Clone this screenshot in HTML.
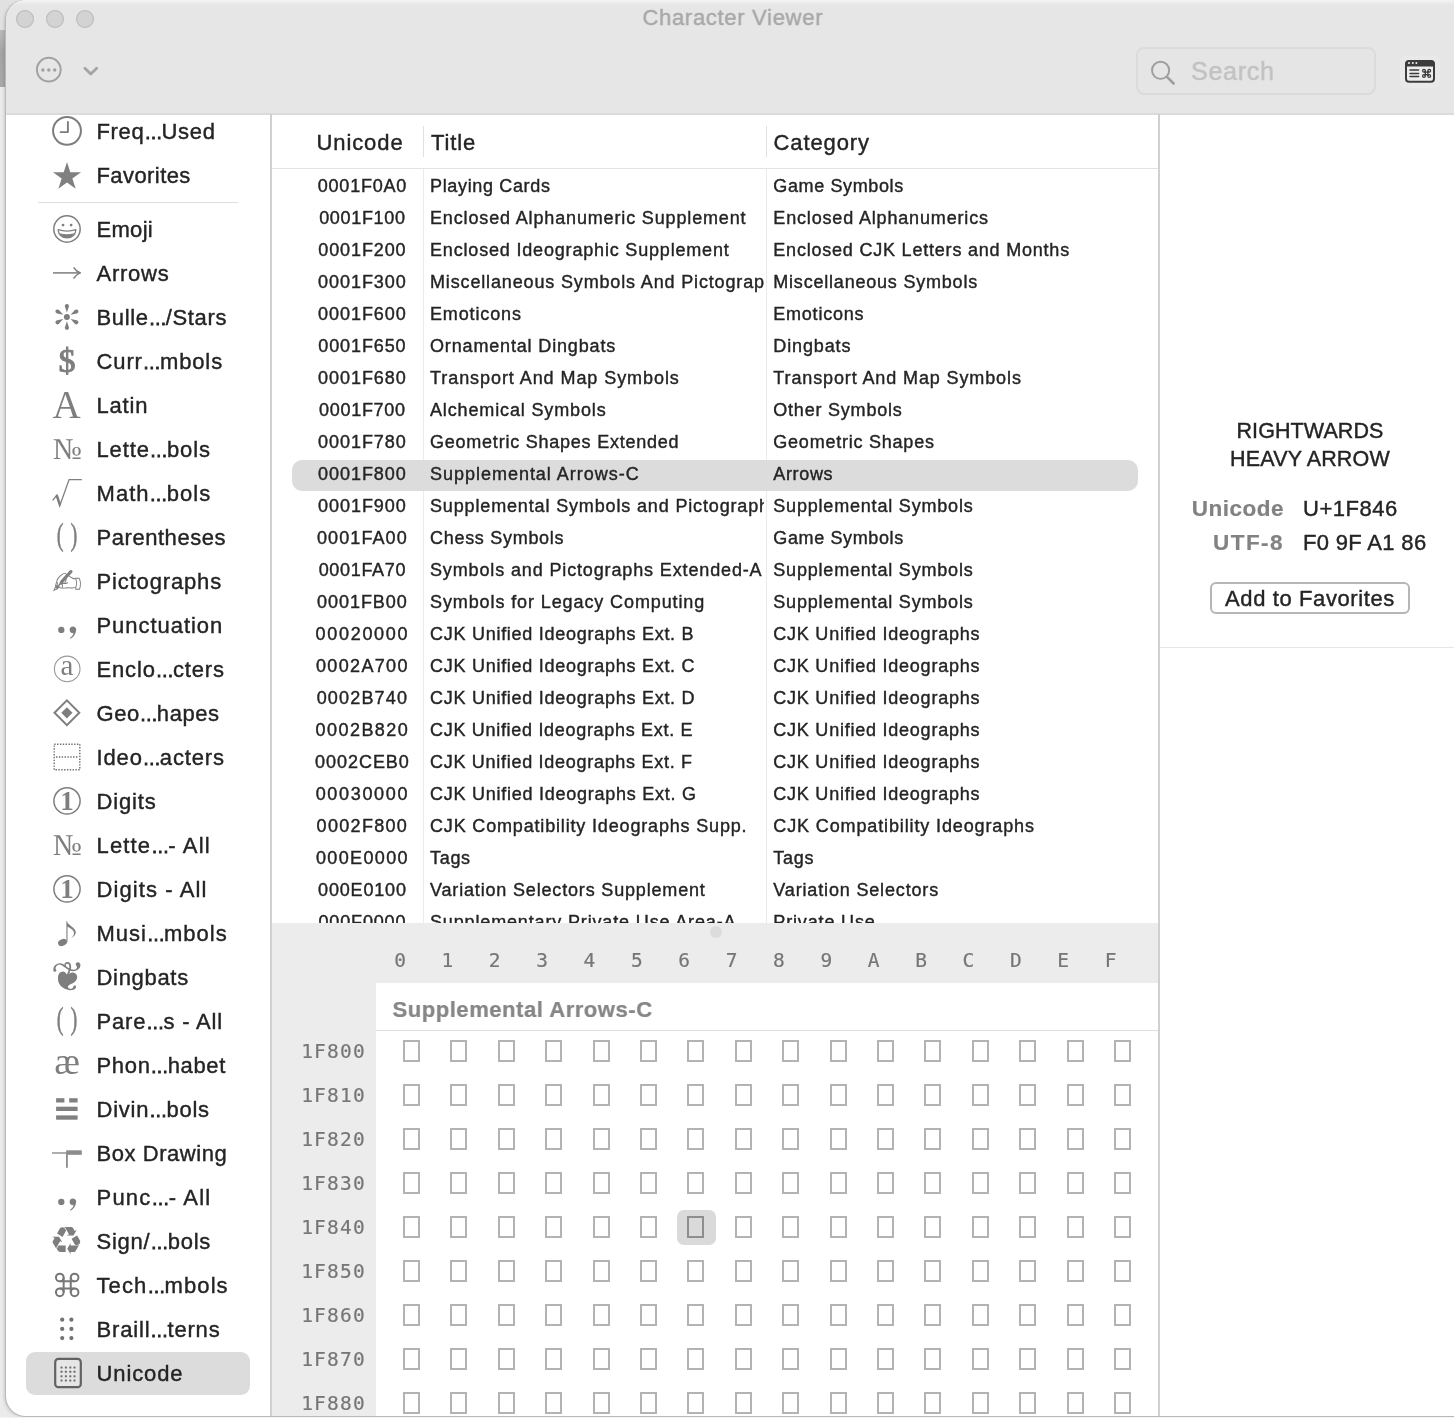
<!DOCTYPE html>
<html lang="en"><head><meta charset="utf-8"><title>Character Viewer</title>
<style>
html,body{margin:0;padding:0}
body{width:1454px;height:1418px;overflow:hidden;position:relative;background:#f6f6f6;font-family:"Liberation Sans",sans-serif;color:#242424}
div,span,svg{position:absolute;box-sizing:border-box}
.t{white-space:nowrap;line-height:1;-webkit-text-stroke:0.4px}
.e{position:static;font-size:18px;letter-spacing:-0.9px;-webkit-text-stroke:0.9px}
.mono{font-family:"DejaVu Sans Mono","Liberation Mono",monospace;-webkit-text-stroke:0.2px}
.b{font-weight:bold;-webkit-text-stroke:0.2px}
.g{color:#767676}
#win{left:6px;top:0;width:1460px;height:1416px;background:#fff;border-radius:20px 0 0 20px;overflow:hidden;box-shadow:-1px 0 0 0 #b9b9b9,0 1px 0 0 #b9b9b9,-2px 1px 3px rgba(0,0,0,.14)}
#bar{left:0;top:0;width:1460px;height:115px;background:linear-gradient(#f4f4f4 0,#e6e6e6 5px);border-bottom:2px solid #dbdbdb}
.tl{width:18px;height:18px;border-radius:9px;background:#d3d3d3;box-shadow:inset 0 0 0 1.2px #bfbfbf;top:9px}
.vl{width:2px;background:#d0d0d0}
.hl{height:1px;background:#e3e3e3}
.sel{background:#dcdcdc;border-radius:10px}
.bx{width:17px;height:22px;border:2px solid #b3b3b3}
</style></head>
<body>
<div style="left:0;top:0;width:40px;height:30px;background:#e1e1e1"></div>
<div style="left:0;top:30px;width:10px;height:57px;background:linear-gradient(#b9b9b9,#a4a4a4 40%,#a9a9a9)"></div>
<div style="left:0;top:87px;width:40px;height:1331px;background:#ebebeb"></div>
<div id="win">
<div id="pg" style="left:-6px;top:0;width:1454px;height:1418px;transform:translateZ(0);filter:grayscale(1)">
<div id="bar" style="left:6px;top:0"></div>
<div class="tl" style="left:16px;top:10px"></div>
<div class="tl" style="left:46px;top:10px"></div>
<div class="tl" style="left:76px;top:10px"></div>
<span class="t" style="top:7.00px;font-size:22px;left:432.80px;width:600px;text-align:center;letter-spacing:0.7px;color:#a9a9a9;">Character Viewer</span>
<div style="left:1136px;top:47px;width:240px;height:48px;border:2px solid #dbdbdb;border-radius:8px;background:#e5e5e5"></div>
<span class="t" style="top:59.00px;font-size:25px;left:1191.00px;letter-spacing:0.75px;color:#c2c2c2;">Search</span>
<svg width="1454" height="114" style="left:0;top:0" viewBox="0 0 1454 114"><circle cx="48.8" cy="69.7" r="11.85" fill="none" stroke="#a2a2a2" stroke-width="2"/><circle cx="42.9" cy="70" r="1.75" fill="#a2a2a2"/><circle cx="48.8" cy="70" r="1.75" fill="#a2a2a2"/><circle cx="54.7" cy="70" r="1.75" fill="#a2a2a2"/><path d="M84.9 68.2 L90.8 74 L96.7 68.2" fill="none" stroke="#a4a4a4" stroke-width="2.8" stroke-linecap="round" stroke-linejoin="round"/><circle cx="1160.6" cy="70.3" r="8.6" fill="none" stroke="#9e9e9e" stroke-width="1.9"/><path d="M1167 76.9 L1173.6 83.5" stroke="#9e9e9e" stroke-width="2.6" stroke-linecap="round"/><rect x="1400" y="56" width="40" height="32" rx="6" fill="#ffffff" opacity="0.13"/><rect x="1406" y="61" width="28" height="20.8" rx="3" fill="#ededed" stroke="#3c3c3c" stroke-width="2"/><path d="M1406 66 V63.5 Q1406 61 1408.5 61 H1431.500 Q1434 61 1434 63.5 V66Z" fill="#3c3c3c" stroke="#3c3c3c" stroke-width="1"/><circle cx="1409.0" cy="63.1" r="1" fill="#f0f0f0"/><circle cx="1412.8" cy="63.1" r="1" fill="#f0f0f0"/><circle cx="1416.4" cy="63.1" r="1" fill="#f0f0f0"/><path d="M1410 70.1 H1418.600" stroke="#3c3c3c" stroke-width="1.5" stroke-linecap="round"/><path d="M1410 73.4 H1418.600" stroke="#3c3c3c" stroke-width="1.5" stroke-linecap="round"/><path d="M1410 76.6 H1418.600" stroke="#3c3c3c" stroke-width="1.5" stroke-linecap="round"/><g transform="translate(1426.60 73.40) scale(0.355)" fill="none" stroke="#3c3c3c" stroke-width="3.66"><circle cx="-7.40" cy="-7.40" r="3.85"/><circle cx="7.40" cy="-7.40" r="3.85"/><circle cx="7.40" cy="7.40" r="3.85"/><circle cx="-7.40" cy="7.40" r="3.85"/><path d="M-3.55 -7.40 V7.40 M3.55 -7.40 V7.40 M-7.40 -3.55 H7.40 M-7.40 3.55 H7.40"/></g></svg>
<div class="sel" style="left:26px;top:1352px;width:224px;height:43px;border-radius:9px"></div>
<div class="hl" style="left:38px;top:202px;width:200px;background:#dedede"></div>
<span id="s0" class="t" style="top:121.00px;font-size:22px;left:96.50px;letter-spacing:0.675px;">Freq<span class="e">…</span>Used</span>
<span id="s1" class="t" style="top:165.00px;font-size:22px;left:96.50px;letter-spacing:0.425px;">Favorites</span>
<span id="s2" class="t" style="top:219.00px;font-size:22px;left:96.50px;letter-spacing:0.3px;">Emoji</span>
<span id="s3" class="t" style="top:263.00px;font-size:22px;left:96.50px;letter-spacing:0.75px;">Arrows</span>
<span id="s4" class="t" style="top:307.00px;font-size:22px;left:96.50px;letter-spacing:0.641px;">Bulle<span class="e">…</span>/Stars</span>
<span id="s5" class="t" style="top:351.00px;font-size:22px;left:96.50px;letter-spacing:0.883px;">Curr<span class="e">…</span>mbols</span>
<span id="s6" class="t" style="top:395.00px;font-size:22px;left:96.50px;letter-spacing:0.8px;">Latin</span>
<span id="s7" class="t" style="top:439.00px;font-size:22px;left:96.50px;letter-spacing:0.883px;">Lette<span class="e">…</span>bols</span>
<span id="s8" class="t" style="top:483.00px;font-size:22px;left:96.50px;letter-spacing:1.05px;">Math<span class="e">…</span>bols</span>
<span id="s9" class="t" style="top:527.00px;font-size:22px;left:96.50px;letter-spacing:0.55px;">Parentheses</span>
<span id="s10" class="t" style="top:571.00px;font-size:22px;left:96.50px;letter-spacing:0.85px;">Pictographs</span>
<span id="s11" class="t" style="top:615.00px;font-size:22px;left:96.50px;letter-spacing:0.95px;">Punctuation</span>
<span id="s12" class="t" style="top:659.00px;font-size:22px;left:96.50px;letter-spacing:0.85px;">Enclo<span class="e">…</span>cters</span>
<span id="s13" class="t" style="top:703.00px;font-size:22px;left:96.50px;letter-spacing:0.55px;">Geo<span class="e">…</span>hapes</span>
<span id="s14" class="t" style="top:747.00px;font-size:22px;left:96.50px;letter-spacing:0.85px;">Ideo<span class="e">…</span>acters</span>
<span id="s15" class="t" style="top:791.00px;font-size:22px;left:96.50px;letter-spacing:0.85px;">Digits</span>
<span id="s16" class="t" style="top:835.00px;font-size:22px;left:96.50px;letter-spacing:1.15px;">Lette<span class="e">…</span>- All</span>
<span id="s17" class="t" style="top:879.00px;font-size:22px;left:96.50px;letter-spacing:1.095px;">Digits - All</span>
<span id="s18" class="t" style="top:923.00px;font-size:22px;left:96.50px;letter-spacing:0.994px;">Musi<span class="e">…</span>mbols</span>
<span id="s19" class="t" style="top:967.00px;font-size:22px;left:96.50px;letter-spacing:0.693px;">Dingbats</span>
<span id="s20" class="t" style="top:1011.00px;font-size:22px;left:96.50px;letter-spacing:0.823px;">Pare<span class="e">…</span>s - All</span>
<span id="s21" class="t" style="top:1055.00px;font-size:22px;left:96.50px;letter-spacing:0.661px;">Phon<span class="e">…</span>habet</span>
<span id="s22" class="t" style="top:1099.00px;font-size:22px;left:96.50px;letter-spacing:0.772px;">Divin<span class="e">…</span>bols</span>
<span id="s23" class="t" style="top:1143.00px;font-size:22px;left:96.50px;letter-spacing:0.55px;">Box Drawing</span>
<span id="s24" class="t" style="top:1187.00px;font-size:22px;left:96.50px;letter-spacing:1.217px;">Punc<span class="e">…</span>- All</span>
<span id="s25" class="t" style="top:1231.00px;font-size:22px;left:96.50px;letter-spacing:0.772px;">Sign/<span class="e">…</span>bols</span>
<span id="s26" class="t" style="top:1275.00px;font-size:22px;left:96.50px;letter-spacing:1.105px;">Tech<span class="e">…</span>mbols</span>
<span id="s27" class="t" style="top:1319.00px;font-size:22px;left:96.50px;letter-spacing:0.823px;">Braill<span class="e">…</span>terns</span>
<span id="s28" class="t" style="top:1363.00px;font-size:22px;left:96.50px;letter-spacing:0.883px;">Unicode</span>
<svg width="270" height="1418" style="left:0;top:0" viewBox="0 0 270 1418"><circle cx="67" cy="130.85" r="13.95" fill="none" stroke="#7e7e7e" stroke-width="2"/><path d="M67.9 122 V132.100 H60.600" fill="none" stroke="#7c7c7c" stroke-width="1.9" stroke-linecap="round" stroke-linejoin="round"/><polygon points="67.00,162.00 70.31,172.20 81.04,172.20 72.36,178.50 75.68,188.70 67.00,182.40 58.32,188.70 61.64,178.50 52.96,172.20 63.69,172.20" fill="#808080"/><circle cx="66.97" cy="229" r="13.2" fill="none" stroke="#7e7e7e" stroke-width="1.5"/><circle cx="63.05" cy="225.05" r="1.4" fill="#7e7e7e"/><circle cx="71.1" cy="225.05" r="1.4" fill="#7e7e7e"/><path d="M58.1 229.700 Q67 232.500 75.900 229.700 Q75 237.800 67 237.800 Q59 237.800 58.100 229.700Z" fill="#fff" stroke="#7e7e7e" stroke-width="1.3" stroke-linejoin="round"/><path d="M59.7 233.300 Q67 235.300 74.300 233.300 Q72.300 237.700 67 237.700 Q61.700 237.700 59.700 233.300Z" fill="#7e7e7e"/><path d="M53 272.900 H79.800" stroke="#7e7e7e" stroke-width="1.5" fill="none"/><path d="M74 267.800 Q76.300 271.600 80.400 272.900 Q76.300 274.200 74 278" stroke="#7e7e7e" stroke-width="1.5" fill="none" stroke-linecap="round" stroke-linejoin="round"/><circle cx="66.9" cy="316.9" r="3.0" fill="#7e7e7e"/><path transform="translate(66.90 316.90) rotate(-90)" d="M4.3 0 L10.25 -1.95 A2.05 2.05 0 1 1 10.25 1.95Z" fill="#7e7e7e"/><path transform="translate(66.90 316.90) rotate(-150)" d="M4.3 0 L10.25 -1.95 A2.05 2.05 0 1 1 10.25 1.95Z" fill="#7e7e7e"/><path transform="translate(66.90 316.90) rotate(-210)" d="M4.3 0 L10.25 -1.95 A2.05 2.05 0 1 1 10.25 1.95Z" fill="#7e7e7e"/><path transform="translate(66.90 316.90) rotate(-270)" d="M4.3 0 L10.25 -1.95 A2.05 2.05 0 1 1 10.25 1.95Z" fill="#7e7e7e"/><path transform="translate(66.90 316.90) rotate(-330)" d="M4.3 0 L10.25 -1.95 A2.05 2.05 0 1 1 10.25 1.95Z" fill="#7e7e7e"/><path transform="translate(66.90 316.90) rotate(-390)" d="M4.3 0 L10.25 -1.95 A2.05 2.05 0 1 1 10.25 1.95Z" fill="#7e7e7e"/><text x="66.9" y="372.4" font-family="&quot;Liberation Serif&quot;,serif" font-size="34" font-weight="normal" text-anchor="middle" fill="#7e7e7e" stroke="#7e7e7e" stroke-width="1">$</text><text x="66.5" y="417.9" font-family="&quot;Liberation Serif&quot;,serif" font-size="39" font-weight="normal" text-anchor="middle" fill="#7e7e7e" >A</text><text x="67.2" y="459.0" font-family="&quot;Liberation Serif&quot;,serif" font-size="30.5" font-weight="normal" text-anchor="middle" fill="#7e7e7e" >№</text><path d="M52.7 500.400 L56.600 495.400 L59.700 506 L69.100 479.600 H81.800" fill="none" stroke="#7e7e7e" stroke-width="1.3" stroke-linejoin="miter"/><path d="M55.6 496 L57.700 494.300 L60.900 503.800 L59.700 507.200Z" fill="#7e7e7e"/><text transform="translate(60.1 545.0) scale(0.64 1)" font-family="&quot;Liberation Serif&quot;,serif" font-size="32" text-anchor="middle" fill="#7e7e7e" stroke="#7e7e7e" stroke-width="0.5">(</text><text transform="translate(74.0 545.0) scale(0.64 1)" font-family="&quot;Liberation Serif&quot;,serif" font-size="32" text-anchor="middle" fill="#7e7e7e" stroke="#7e7e7e" stroke-width="0.5">)</text><text x="67.0" y="593.6" font-family="&quot;DejaVu Sans&quot;,sans-serif" font-size="35.5" font-weight="normal" text-anchor="middle" fill="#7e7e7e" >✍</text><circle cx="61.3" cy="629.9" r="3.15" fill="#7e7e7e"/><path d="M72.9 629.90 m-3.3 0 a3.3 3.3 0 1 1 6.500 0.600 c-0.300 3.600 -2.400 6.400 -5.600 8.300 l-0.600 -0.900 c2.300 -1.600 3.500 -3.300 3.600 -5.200 c-0.400 0.300 -0.800 0.500 -1.400 0.500 a3.300 3.300 0 0 1 -2.500 -3.300Z" fill="#7e7e7e"/><circle cx="67.2" cy="668.9" r="12.8" fill="none" stroke="#9a9a9a" stroke-width="1.1"/><text x="67.0" y="675.2" font-family="&quot;Liberation Serif&quot;,serif" font-size="29" font-weight="normal" text-anchor="middle" fill="#7e7e7e" >a</text><path d="M66.9 700.400 L79.300 712.800 L66.900 725.200 L54.500 712.800Z" fill="none" stroke="#7e7e7e" stroke-width="2"/><path d="M66.9 707.200 L72.500 712.800 L66.900 718.400 L61.300 712.800Z" fill="#7e7e7e"/><rect x="54.2" y="744.200" width="25.6" height="25.6" fill="none" stroke="#6e6e6e" stroke-width="1.4" stroke-dasharray="1.4 1.45"/><path d="M56 757 H78" stroke="#6e6e6e" stroke-width="1.4" stroke-dasharray="1.4 1.45"/><circle cx="67" cy="800.9" r="13.1" fill="none" stroke="#7e7e7e" stroke-width="1.5"/><text x="67.0" y="810.1" font-family="&quot;Liberation Serif&quot;,serif" font-size="27" font-weight="bold" text-anchor="middle" fill="#7e7e7e" >1</text><circle cx="67" cy="888.9" r="13.1" fill="none" stroke="#7e7e7e" stroke-width="1.5"/><text x="67.0" y="898.1" font-family="&quot;Liberation Serif&quot;,serif" font-size="27" font-weight="bold" text-anchor="middle" fill="#7e7e7e" >1</text><text x="67.2" y="855.0" font-family="&quot;Liberation Serif&quot;,serif" font-size="30.5" font-weight="normal" text-anchor="middle" fill="#7e7e7e" >№</text><ellipse cx="62.500" cy="942.500" rx="4.6" ry="3.3" transform="rotate(-22 62.500 942.500)" fill="#7e7e7e"/><path d="M66.4 942 V920.300 C67.500 925.500 76 927.500 75.800 932.600 C75.700 935 73.500 936.800 71.200 938.200 C73.500 936 74.500 934 73.800 932 C72.800 929 69 928 67.500 926.500 V942Z" fill="#7e7e7e"/><text x="68.0" y="991.3" font-family="&quot;DejaVu Sans&quot;,sans-serif" font-size="41" font-weight="normal" text-anchor="middle" fill="#7e7e7e" >❦</text><text transform="translate(60.1 1029.0) scale(0.64 1)" font-family="&quot;Liberation Serif&quot;,serif" font-size="32" text-anchor="middle" fill="#7e7e7e" stroke="#7e7e7e" stroke-width="0.5">(</text><text transform="translate(74.0 1029.0) scale(0.64 1)" font-family="&quot;Liberation Serif&quot;,serif" font-size="32" text-anchor="middle" fill="#7e7e7e" stroke="#7e7e7e" stroke-width="0.5">)</text><text x="67.2" y="1074.2" font-family="&quot;Liberation Serif&quot;,serif" font-size="38.5" font-weight="normal" text-anchor="middle" fill="#7e7e7e" >æ</text><rect x="56.1" y="1098.2" width="8.3" height="4.3" fill="#808080"/><rect x="69.2" y="1098.2" width="8.400" height="4.3" fill="#808080"/><rect x="56.1" y="1106.7" width="21.5" height="4.3" fill="#808080"/><rect x="56.1" y="1115.4" width="21.5" height="4.3" fill="#808080"/><rect x="52" y="1152.300" width="15" height="1.4" fill="#8c8c8c"/><rect x="66.2" y="1150.300" width="15.6" height="4.5" fill="#8c8c8c"/><rect x="66" y="1154" width="1.8" height="13.8" fill="#8c8c8c"/><circle cx="61.3" cy="1201.9" r="3.15" fill="#7e7e7e"/><path d="M72.9 1201.90 m-3.3 0 a3.3 3.3 0 1 1 6.500 0.600 c-0.300 3.600 -2.400 6.400 -5.600 8.300 l-0.600 -0.900 c2.300 -1.600 3.500 -3.300 3.600 -5.200 c-0.400 0.300 -0.800 0.500 -1.400 0.500 a3.300 3.300 0 0 1 -2.500 -3.300Z" fill="#7e7e7e"/><text x="66.5" y="1253.9" font-family="&quot;DejaVu Sans&quot;,sans-serif" font-size="38" font-weight="normal" text-anchor="middle" fill="#7e7e7e" >♻</text><g transform="translate(67.20 1284.90) scale(1.000)" fill="none" stroke="#777777" stroke-width="2.00"><circle cx="-7.40" cy="-7.40" r="3.85"/><circle cx="7.40" cy="-7.40" r="3.85"/><circle cx="7.40" cy="7.40" r="3.85"/><circle cx="-7.40" cy="7.40" r="3.85"/><path d="M-3.55 -7.40 V7.40 M3.55 -7.40 V7.40 M-7.40 -3.55 H7.40 M-7.40 3.55 H7.40"/></g><circle cx="62.2" cy="1319.7" r="2.1" fill="#727272"/><circle cx="62.2" cy="1328.9" r="2.1" fill="#727272"/><circle cx="62.2" cy="1338.1" r="2.1" fill="#727272"/><circle cx="71.4" cy="1319.7" r="2.1" fill="#727272"/><circle cx="71.4" cy="1328.9" r="2.1" fill="#727272"/><circle cx="71.4" cy="1338.1" r="2.1" fill="#727272"/><rect x="55.2" y="1358.900" width="25.6" height="28.3" rx="3.3" fill="#e6e6e6" stroke="#626262" stroke-width="2.2"/><rect x="60.5" y="1366.4" width="2" height="2" rx="0.5" fill="#6c6c6c"/><rect x="60.5" y="1370.8" width="2" height="2" rx="0.5" fill="#6c6c6c"/><rect x="60.5" y="1375.2" width="2" height="2" rx="0.5" fill="#6c6c6c"/><rect x="60.5" y="1379.4" width="2" height="2" rx="0.5" fill="#6c6c6c"/><rect x="64.9" y="1366.4" width="2" height="2" rx="0.5" fill="#6c6c6c"/><rect x="64.9" y="1370.8" width="2" height="2" rx="0.5" fill="#6c6c6c"/><rect x="64.9" y="1375.2" width="2" height="2" rx="0.5" fill="#6c6c6c"/><rect x="64.9" y="1379.4" width="2" height="2" rx="0.5" fill="#6c6c6c"/><rect x="69.3" y="1366.4" width="2" height="2" rx="0.5" fill="#6c6c6c"/><rect x="69.3" y="1370.8" width="2" height="2" rx="0.5" fill="#6c6c6c"/><rect x="69.3" y="1375.2" width="2" height="2" rx="0.5" fill="#6c6c6c"/><rect x="69.3" y="1379.4" width="2" height="2" rx="0.5" fill="#6c6c6c"/><rect x="73.5" y="1366.4" width="2" height="2" rx="0.5" fill="#6c6c6c"/><rect x="73.5" y="1370.8" width="2" height="2" rx="0.5" fill="#6c6c6c"/><rect x="73.5" y="1375.2" width="2" height="2" rx="0.5" fill="#6c6c6c"/><rect x="73.5" y="1379.4" width="2" height="2" rx="0.5" fill="#6c6c6c"/></svg>
<div class="vl" style="left:270px;top:114px;height:1304px"></div>
<span class="t" style="top:132.00px;font-size:22px;left:316.50px;letter-spacing:0.9px;">Unicode</span>
<span class="t" style="top:132.00px;font-size:22px;left:431.00px;letter-spacing:0.9px;">Title</span>
<span class="t" style="top:132.00px;font-size:22px;left:773.50px;letter-spacing:0.9px;">Category</span>
<div class="vl" style="left:422.5px;top:126px;height:31px;width:1px;background:#e0e0e0"></div>
<div class="vl" style="left:765.5px;top:126px;height:31px;width:1px;background:#e0e0e0"></div>
<div class="hl" style="left:272px;top:168px;width:887px"></div>
<div class="vl" style="left:422.5px;top:169px;height:755px;width:1.5px;background:#ebebeb"></div>
<div class="vl" style="left:765.5px;top:169px;height:755px;width:1.5px;background:#ebebeb"></div>
<div class="sel" style="left:292px;top:460px;width:846px;height:31px"></div>
<span id="u0" class="t" style="top:177.00px;font-size:18px;left:62.40px;width:600px;text-align:center;letter-spacing:0.761px;">0001F0A0</span>
<span id="t0" class="t" style="top:177.00px;font-size:18px;left:430.00px;letter-spacing:0.654px;width:334px;overflow:hidden;padding-bottom:6px;">Playing Cards</span>
<span id="c0" class="t" style="top:177.00px;font-size:18px;left:773.30px;letter-spacing:0.627px;">Game Symbols</span>
<span id="u1" class="t" style="top:209.00px;font-size:18px;left:62.40px;width:600px;text-align:center;letter-spacing:0.676px;">0001F100</span>
<span id="t1" class="t" style="top:209.00px;font-size:18px;left:430.00px;letter-spacing:0.852px;width:334px;overflow:hidden;padding-bottom:6px;">Enclosed Alphanumeric Supplement</span>
<span id="c1" class="t" style="top:209.00px;font-size:18px;left:773.30px;letter-spacing:0.837px;">Enclosed Alphanumerics</span>
<span id="u2" class="t" style="top:241.00px;font-size:18px;left:62.40px;width:600px;text-align:center;letter-spacing:0.877px;">0001F200</span>
<span id="t2" class="t" style="top:241.00px;font-size:18px;left:430.00px;letter-spacing:0.82px;width:334px;overflow:hidden;padding-bottom:6px;">Enclosed Ideographic Supplement</span>
<span id="c2" class="t" style="top:241.00px;font-size:18px;left:773.30px;letter-spacing:0.79px;">Enclosed CJK Letters and Months</span>
<span id="u3" class="t" style="top:273.00px;font-size:18px;left:62.40px;width:600px;text-align:center;letter-spacing:0.962px;">0001F300</span>
<span id="t3" class="t" style="top:273.00px;font-size:18px;left:430.00px;letter-spacing:0.85px;width:334px;overflow:hidden;padding-bottom:6px;">Miscellaneous Symbols And Pictographs</span>
<span id="c3" class="t" style="top:273.00px;font-size:18px;left:773.30px;letter-spacing:0.79px;">Miscellaneous Symbols</span>
<span id="u4" class="t" style="top:305.00px;font-size:18px;left:62.40px;width:600px;text-align:center;letter-spacing:0.962px;">0001F600</span>
<span id="t4" class="t" style="top:305.00px;font-size:18px;left:430.00px;letter-spacing:0.861px;width:334px;overflow:hidden;padding-bottom:6px;">Emoticons</span>
<span id="c4" class="t" style="top:305.00px;font-size:18px;left:773.30px;letter-spacing:0.77px;">Emoticons</span>
<span id="u5" class="t" style="top:337.00px;font-size:18px;left:62.40px;width:600px;text-align:center;letter-spacing:0.877px;">0001F650</span>
<span id="t5" class="t" style="top:337.00px;font-size:18px;left:430.00px;letter-spacing:0.842px;width:334px;overflow:hidden;padding-bottom:6px;">Ornamental Dingbats</span>
<span id="c5" class="t" style="top:337.00px;font-size:18px;left:773.30px;letter-spacing:0.879px;">Dingbats</span>
<span id="u6" class="t" style="top:369.00px;font-size:18px;left:62.40px;width:600px;text-align:center;letter-spacing:0.966px;">0001F680</span>
<span id="t6" class="t" style="top:369.00px;font-size:18px;left:430.00px;letter-spacing:0.935px;width:334px;overflow:hidden;padding-bottom:6px;">Transport And Map Symbols</span>
<span id="c6" class="t" style="top:369.00px;font-size:18px;left:773.30px;letter-spacing:0.882px;">Transport And Map Symbols</span>
<span id="u7" class="t" style="top:401.00px;font-size:18px;left:62.40px;width:600px;text-align:center;letter-spacing:0.734px;">0001F700</span>
<span id="t7" class="t" style="top:401.00px;font-size:18px;left:430.00px;letter-spacing:0.859px;width:334px;overflow:hidden;padding-bottom:6px;">Alchemical Symbols</span>
<span id="c7" class="t" style="top:401.00px;font-size:18px;left:773.30px;letter-spacing:0.785px;">Other Symbols</span>
<span id="u8" class="t" style="top:433.00px;font-size:18px;left:62.40px;width:600px;text-align:center;letter-spacing:0.939px;">0001F780</span>
<span id="t8" class="t" style="top:433.00px;font-size:18px;left:430.00px;letter-spacing:0.769px;width:334px;overflow:hidden;padding-bottom:6px;">Geometric Shapes Extended</span>
<span id="c8" class="t" style="top:433.00px;font-size:18px;left:773.30px;letter-spacing:0.77px;">Geometric Shapes</span>
<span id="u9" class="t" style="top:465.00px;font-size:18px;left:62.40px;width:600px;text-align:center;letter-spacing:0.962px;">0001F800</span>
<span id="t9" class="t" style="top:465.00px;font-size:18px;left:430.00px;letter-spacing:0.98px;width:334px;overflow:hidden;padding-bottom:6px;">Supplemental Arrows-C</span>
<span id="c9" class="t" style="top:465.00px;font-size:18px;left:773.30px;letter-spacing:0.66px;">Arrows</span>
<span id="u10" class="t" style="top:497.00px;font-size:18px;left:62.40px;width:600px;text-align:center;letter-spacing:0.966px;">0001F900</span>
<span id="t10" class="t" style="top:497.00px;font-size:18px;left:430.00px;letter-spacing:0.85px;width:334px;overflow:hidden;padding-bottom:6px;">Supplemental Symbols and Pictographs</span>
<span id="c10" class="t" style="top:497.00px;font-size:18px;left:773.30px;letter-spacing:0.806px;">Supplemental Symbols</span>
<span id="u11" class="t" style="top:529.00px;font-size:18px;left:62.40px;width:600px;text-align:center;letter-spacing:1.081px;">0001FA00</span>
<span id="t11" class="t" style="top:529.00px;font-size:18px;left:430.00px;letter-spacing:0.707px;width:334px;overflow:hidden;padding-bottom:6px;">Chess Symbols</span>
<span id="c11" class="t" style="top:529.00px;font-size:18px;left:773.30px;letter-spacing:0.627px;">Game Symbols</span>
<span id="u12" class="t" style="top:561.00px;font-size:18px;left:62.40px;width:600px;text-align:center;letter-spacing:0.68px;">0001FA70</span>
<span id="t12" class="t" style="top:561.00px;font-size:18px;left:430.00px;letter-spacing:0.862px;width:334px;overflow:hidden;padding-bottom:6px;">Symbols and Pictographs Extended-A</span>
<span id="c12" class="t" style="top:561.00px;font-size:18px;left:773.30px;letter-spacing:0.806px;">Supplemental Symbols</span>
<span id="u13" class="t" style="top:593.00px;font-size:18px;left:62.40px;width:600px;text-align:center;letter-spacing:0.939px;">0001FB00</span>
<span id="t13" class="t" style="top:593.00px;font-size:18px;left:430.00px;letter-spacing:0.895px;width:334px;overflow:hidden;padding-bottom:6px;">Symbols for Legacy Computing</span>
<span id="c13" class="t" style="top:593.00px;font-size:18px;left:773.30px;letter-spacing:0.806px;">Supplemental Symbols</span>
<span id="u14" class="t" style="top:625.00px;font-size:18px;left:62.40px;width:600px;text-align:center;letter-spacing:1.707px;">00020000</span>
<span id="t14" class="t" style="top:625.00px;font-size:18px;left:430.00px;letter-spacing:0.731px;width:334px;overflow:hidden;padding-bottom:6px;">CJK Unified Ideographs Ext. B</span>
<span id="c14" class="t" style="top:625.00px;font-size:18px;left:773.30px;letter-spacing:0.766px;">CJK Unified Ideographs</span>
<span id="u15" class="t" style="top:657.00px;font-size:18px;left:62.40px;width:600px;text-align:center;letter-spacing:1.336px;">0002A700</span>
<span id="t15" class="t" style="top:657.00px;font-size:18px;left:430.00px;letter-spacing:0.731px;width:334px;overflow:hidden;padding-bottom:6px;">CJK Unified Ideographs Ext. C</span>
<span id="c15" class="t" style="top:657.00px;font-size:18px;left:773.30px;letter-spacing:0.766px;">CJK Unified Ideographs</span>
<span id="u16" class="t" style="top:689.00px;font-size:18px;left:62.40px;width:600px;text-align:center;letter-spacing:1.166px;">0002B740</span>
<span id="t16" class="t" style="top:689.00px;font-size:18px;left:430.00px;letter-spacing:0.731px;width:334px;overflow:hidden;padding-bottom:6px;">CJK Unified Ideographs Ext. D</span>
<span id="c16" class="t" style="top:689.00px;font-size:18px;left:773.30px;letter-spacing:0.766px;">CJK Unified Ideographs</span>
<span id="u17" class="t" style="top:721.00px;font-size:18px;left:62.40px;width:600px;text-align:center;letter-spacing:1.452px;">0002B820</span>
<span id="t17" class="t" style="top:721.00px;font-size:18px;left:430.00px;letter-spacing:0.695px;width:334px;overflow:hidden;padding-bottom:6px;">CJK Unified Ideographs Ext. E</span>
<span id="c17" class="t" style="top:721.00px;font-size:18px;left:773.30px;letter-spacing:0.766px;">CJK Unified Ideographs</span>
<span id="u18" class="t" style="top:753.00px;font-size:18px;left:62.40px;width:600px;text-align:center;letter-spacing:0.992px;">0002CEB0</span>
<span id="t18" class="t" style="top:753.00px;font-size:18px;left:430.00px;letter-spacing:0.713px;width:334px;overflow:hidden;padding-bottom:6px;">CJK Unified Ideographs Ext. F</span>
<span id="c18" class="t" style="top:753.00px;font-size:18px;left:773.30px;letter-spacing:0.766px;">CJK Unified Ideographs</span>
<span id="u19" class="t" style="top:785.00px;font-size:18px;left:62.40px;width:600px;text-align:center;letter-spacing:1.676px;">00030000</span>
<span id="t19" class="t" style="top:785.00px;font-size:18px;left:430.00px;letter-spacing:0.749px;width:334px;overflow:hidden;padding-bottom:6px;">CJK Unified Ideographs Ext. G</span>
<span id="c19" class="t" style="top:785.00px;font-size:18px;left:773.30px;letter-spacing:0.766px;">CJK Unified Ideographs</span>
<span id="u20" class="t" style="top:817.00px;font-size:18px;left:62.40px;width:600px;text-align:center;letter-spacing:1.309px;">0002F800</span>
<span id="t20" class="t" style="top:817.00px;font-size:18px;left:430.00px;letter-spacing:0.832px;width:334px;overflow:hidden;padding-bottom:6px;">CJK Compatibility Ideographs Supp.</span>
<span id="c20" class="t" style="top:817.00px;font-size:18px;left:773.30px;letter-spacing:0.872px;">CJK Compatibility Ideographs</span>
<span id="u21" class="t" style="top:849.00px;font-size:18px;left:62.40px;width:600px;text-align:center;letter-spacing:1.364px;">000E0000</span>
<span id="t21" class="t" style="top:849.00px;font-size:18px;left:430.00px;letter-spacing:0.685px;width:334px;overflow:hidden;padding-bottom:6px;">Tags</span>
<span id="c21" class="t" style="top:849.00px;font-size:18px;left:773.30px;letter-spacing:0.748px;">Tags</span>
<span id="u22" class="t" style="top:881.00px;font-size:18px;left:62.40px;width:600px;text-align:center;letter-spacing:0.823px;">000E0100</span>
<span id="t22" class="t" style="top:881.00px;font-size:18px;left:430.00px;letter-spacing:0.83px;width:334px;overflow:hidden;padding-bottom:6px;">Variation Selectors Supplement</span>
<span id="c22" class="t" style="top:881.00px;font-size:18px;left:773.30px;letter-spacing:0.842px;">Variation Selectors</span>
<span id="u23" class="t" style="top:913.00px;font-size:18px;left:62.40px;width:600px;text-align:center;letter-spacing:0.85px;">000F0000</span>
<span id="t23" class="t" style="top:913.00px;font-size:18px;left:430.00px;letter-spacing:0.85px;width:334px;overflow:hidden;padding-bottom:6px;">Supplementary Private Use Area-A</span>
<span id="c23" class="t" style="top:913.00px;font-size:18px;left:773.30px;letter-spacing:0.85px;">Private Use</span>
<div style="left:272px;top:923px;width:887px;height:495px;background:#ececec"></div>
<div style="left:376px;top:983px;width:783px;height:435px;background:#fff"></div>
<div style="left:709.5px;top:926px;width:12px;height:12px;border-radius:6px;background:#dcdcdc"></div>
<span class="t mono g" style="top:951.00px;font-size:19.5px;left:100.00px;width:600px;text-align:center;">0</span>
<span class="t mono g" style="top:951.00px;font-size:19.5px;left:147.37px;width:600px;text-align:center;">1</span>
<span class="t mono g" style="top:951.00px;font-size:19.5px;left:194.74px;width:600px;text-align:center;">2</span>
<span class="t mono g" style="top:951.00px;font-size:19.5px;left:242.11px;width:600px;text-align:center;">3</span>
<span class="t mono g" style="top:951.00px;font-size:19.5px;left:289.48px;width:600px;text-align:center;">4</span>
<span class="t mono g" style="top:951.00px;font-size:19.5px;left:336.85px;width:600px;text-align:center;">5</span>
<span class="t mono g" style="top:951.00px;font-size:19.5px;left:384.22px;width:600px;text-align:center;">6</span>
<span class="t mono g" style="top:951.00px;font-size:19.5px;left:431.59px;width:600px;text-align:center;">7</span>
<span class="t mono g" style="top:951.00px;font-size:19.5px;left:478.96px;width:600px;text-align:center;">8</span>
<span class="t mono g" style="top:951.00px;font-size:19.5px;left:526.33px;width:600px;text-align:center;">9</span>
<span class="t mono g" style="top:951.00px;font-size:19.5px;left:573.70px;width:600px;text-align:center;">A</span>
<span class="t mono g" style="top:951.00px;font-size:19.5px;left:621.07px;width:600px;text-align:center;">B</span>
<span class="t mono g" style="top:951.00px;font-size:19.5px;left:668.44px;width:600px;text-align:center;">C</span>
<span class="t mono g" style="top:951.00px;font-size:19.5px;left:715.81px;width:600px;text-align:center;">D</span>
<span class="t mono g" style="top:951.00px;font-size:19.5px;left:763.18px;width:600px;text-align:center;">E</span>
<span class="t mono g" style="top:951.00px;font-size:19.5px;left:810.55px;width:600px;text-align:center;">F</span>
<span class="t b" style="top:999.00px;font-size:22px;left:392.50px;letter-spacing:0.55px;color:#878787;">Supplemental Arrows-C</span>
<div class="hl" style="left:376px;top:1030px;width:783px;background:#dedede"></div>
<div style="left:676.5px;top:1210px;width:39px;height:34.5px;border-radius:7px;background:#dadada"></div>
<span class="t mono g" style="top:1042.00px;font-size:19.5px;left:33.50px;width:600px;text-align:center;letter-spacing:1.2px;">1F800</span>
<div class="bx" style="left:403.0px;top:1039.8px;"></div>
<div class="bx" style="left:450.4px;top:1039.8px;"></div>
<div class="bx" style="left:497.8px;top:1039.8px;"></div>
<div class="bx" style="left:545.2px;top:1039.8px;"></div>
<div class="bx" style="left:592.6px;top:1039.8px;"></div>
<div class="bx" style="left:640.0px;top:1039.8px;"></div>
<div class="bx" style="left:687.4px;top:1039.8px;"></div>
<div class="bx" style="left:734.8px;top:1039.8px;"></div>
<div class="bx" style="left:782.2px;top:1039.8px;"></div>
<div class="bx" style="left:829.6px;top:1039.8px;"></div>
<div class="bx" style="left:877.0px;top:1039.8px;"></div>
<div class="bx" style="left:924.4px;top:1039.8px;"></div>
<div class="bx" style="left:971.8px;top:1039.8px;"></div>
<div class="bx" style="left:1019.2px;top:1039.8px;"></div>
<div class="bx" style="left:1066.6px;top:1039.8px;"></div>
<div class="bx" style="left:1114.0px;top:1039.8px;"></div>
<span class="t mono g" style="top:1086.00px;font-size:19.5px;left:33.50px;width:600px;text-align:center;letter-spacing:1.2px;">1F810</span>
<div class="bx" style="left:403.0px;top:1083.8px;"></div>
<div class="bx" style="left:450.4px;top:1083.8px;"></div>
<div class="bx" style="left:497.8px;top:1083.8px;"></div>
<div class="bx" style="left:545.2px;top:1083.8px;"></div>
<div class="bx" style="left:592.6px;top:1083.8px;"></div>
<div class="bx" style="left:640.0px;top:1083.8px;"></div>
<div class="bx" style="left:687.4px;top:1083.8px;"></div>
<div class="bx" style="left:734.8px;top:1083.8px;"></div>
<div class="bx" style="left:782.2px;top:1083.8px;"></div>
<div class="bx" style="left:829.6px;top:1083.8px;"></div>
<div class="bx" style="left:877.0px;top:1083.8px;"></div>
<div class="bx" style="left:924.4px;top:1083.8px;"></div>
<div class="bx" style="left:971.8px;top:1083.8px;"></div>
<div class="bx" style="left:1019.2px;top:1083.8px;"></div>
<div class="bx" style="left:1066.6px;top:1083.8px;"></div>
<div class="bx" style="left:1114.0px;top:1083.8px;"></div>
<span class="t mono g" style="top:1130.00px;font-size:19.5px;left:33.50px;width:600px;text-align:center;letter-spacing:1.2px;">1F820</span>
<div class="bx" style="left:403.0px;top:1127.8px;"></div>
<div class="bx" style="left:450.4px;top:1127.8px;"></div>
<div class="bx" style="left:497.8px;top:1127.8px;"></div>
<div class="bx" style="left:545.2px;top:1127.8px;"></div>
<div class="bx" style="left:592.6px;top:1127.8px;"></div>
<div class="bx" style="left:640.0px;top:1127.8px;"></div>
<div class="bx" style="left:687.4px;top:1127.8px;"></div>
<div class="bx" style="left:734.8px;top:1127.8px;"></div>
<div class="bx" style="left:782.2px;top:1127.8px;"></div>
<div class="bx" style="left:829.6px;top:1127.8px;"></div>
<div class="bx" style="left:877.0px;top:1127.8px;"></div>
<div class="bx" style="left:924.4px;top:1127.8px;"></div>
<div class="bx" style="left:971.8px;top:1127.8px;"></div>
<div class="bx" style="left:1019.2px;top:1127.8px;"></div>
<div class="bx" style="left:1066.6px;top:1127.8px;"></div>
<div class="bx" style="left:1114.0px;top:1127.8px;"></div>
<span class="t mono g" style="top:1174.00px;font-size:19.5px;left:33.50px;width:600px;text-align:center;letter-spacing:1.2px;">1F830</span>
<div class="bx" style="left:403.0px;top:1171.8px;"></div>
<div class="bx" style="left:450.4px;top:1171.8px;"></div>
<div class="bx" style="left:497.8px;top:1171.8px;"></div>
<div class="bx" style="left:545.2px;top:1171.8px;"></div>
<div class="bx" style="left:592.6px;top:1171.8px;"></div>
<div class="bx" style="left:640.0px;top:1171.8px;"></div>
<div class="bx" style="left:687.4px;top:1171.8px;"></div>
<div class="bx" style="left:734.8px;top:1171.8px;"></div>
<div class="bx" style="left:782.2px;top:1171.8px;"></div>
<div class="bx" style="left:829.6px;top:1171.8px;"></div>
<div class="bx" style="left:877.0px;top:1171.8px;"></div>
<div class="bx" style="left:924.4px;top:1171.8px;"></div>
<div class="bx" style="left:971.8px;top:1171.8px;"></div>
<div class="bx" style="left:1019.2px;top:1171.8px;"></div>
<div class="bx" style="left:1066.6px;top:1171.8px;"></div>
<div class="bx" style="left:1114.0px;top:1171.8px;"></div>
<span class="t mono g" style="top:1218.00px;font-size:19.5px;left:33.50px;width:600px;text-align:center;letter-spacing:1.2px;">1F840</span>
<div class="bx" style="left:403.0px;top:1215.8px;"></div>
<div class="bx" style="left:450.4px;top:1215.8px;"></div>
<div class="bx" style="left:497.8px;top:1215.8px;"></div>
<div class="bx" style="left:545.2px;top:1215.8px;"></div>
<div class="bx" style="left:592.6px;top:1215.8px;"></div>
<div class="bx" style="left:640.0px;top:1215.8px;"></div>
<div class="bx" style="left:687.4px;top:1215.8px;border-color:#8e8e8e;"></div>
<div class="bx" style="left:734.8px;top:1215.8px;"></div>
<div class="bx" style="left:782.2px;top:1215.8px;"></div>
<div class="bx" style="left:829.6px;top:1215.8px;"></div>
<div class="bx" style="left:877.0px;top:1215.8px;"></div>
<div class="bx" style="left:924.4px;top:1215.8px;"></div>
<div class="bx" style="left:971.8px;top:1215.8px;"></div>
<div class="bx" style="left:1019.2px;top:1215.8px;"></div>
<div class="bx" style="left:1066.6px;top:1215.8px;"></div>
<div class="bx" style="left:1114.0px;top:1215.8px;"></div>
<span class="t mono g" style="top:1262.00px;font-size:19.5px;left:33.50px;width:600px;text-align:center;letter-spacing:1.2px;">1F850</span>
<div class="bx" style="left:403.0px;top:1259.8px;"></div>
<div class="bx" style="left:450.4px;top:1259.8px;"></div>
<div class="bx" style="left:497.8px;top:1259.8px;"></div>
<div class="bx" style="left:545.2px;top:1259.8px;"></div>
<div class="bx" style="left:592.6px;top:1259.8px;"></div>
<div class="bx" style="left:640.0px;top:1259.8px;"></div>
<div class="bx" style="left:687.4px;top:1259.8px;"></div>
<div class="bx" style="left:734.8px;top:1259.8px;"></div>
<div class="bx" style="left:782.2px;top:1259.8px;"></div>
<div class="bx" style="left:829.6px;top:1259.8px;"></div>
<div class="bx" style="left:877.0px;top:1259.8px;"></div>
<div class="bx" style="left:924.4px;top:1259.8px;"></div>
<div class="bx" style="left:971.8px;top:1259.8px;"></div>
<div class="bx" style="left:1019.2px;top:1259.8px;"></div>
<div class="bx" style="left:1066.6px;top:1259.8px;"></div>
<div class="bx" style="left:1114.0px;top:1259.8px;"></div>
<span class="t mono g" style="top:1306.00px;font-size:19.5px;left:33.50px;width:600px;text-align:center;letter-spacing:1.2px;">1F860</span>
<div class="bx" style="left:403.0px;top:1303.8px;"></div>
<div class="bx" style="left:450.4px;top:1303.8px;"></div>
<div class="bx" style="left:497.8px;top:1303.8px;"></div>
<div class="bx" style="left:545.2px;top:1303.8px;"></div>
<div class="bx" style="left:592.6px;top:1303.8px;"></div>
<div class="bx" style="left:640.0px;top:1303.8px;"></div>
<div class="bx" style="left:687.4px;top:1303.8px;"></div>
<div class="bx" style="left:734.8px;top:1303.8px;"></div>
<div class="bx" style="left:782.2px;top:1303.8px;"></div>
<div class="bx" style="left:829.6px;top:1303.8px;"></div>
<div class="bx" style="left:877.0px;top:1303.8px;"></div>
<div class="bx" style="left:924.4px;top:1303.8px;"></div>
<div class="bx" style="left:971.8px;top:1303.8px;"></div>
<div class="bx" style="left:1019.2px;top:1303.8px;"></div>
<div class="bx" style="left:1066.6px;top:1303.8px;"></div>
<div class="bx" style="left:1114.0px;top:1303.8px;"></div>
<span class="t mono g" style="top:1350.00px;font-size:19.5px;left:33.50px;width:600px;text-align:center;letter-spacing:1.2px;">1F870</span>
<div class="bx" style="left:403.0px;top:1347.8px;"></div>
<div class="bx" style="left:450.4px;top:1347.8px;"></div>
<div class="bx" style="left:497.8px;top:1347.8px;"></div>
<div class="bx" style="left:545.2px;top:1347.8px;"></div>
<div class="bx" style="left:592.6px;top:1347.8px;"></div>
<div class="bx" style="left:640.0px;top:1347.8px;"></div>
<div class="bx" style="left:687.4px;top:1347.8px;"></div>
<div class="bx" style="left:734.8px;top:1347.8px;"></div>
<div class="bx" style="left:782.2px;top:1347.8px;"></div>
<div class="bx" style="left:829.6px;top:1347.8px;"></div>
<div class="bx" style="left:877.0px;top:1347.8px;"></div>
<div class="bx" style="left:924.4px;top:1347.8px;"></div>
<div class="bx" style="left:971.8px;top:1347.8px;"></div>
<div class="bx" style="left:1019.2px;top:1347.8px;"></div>
<div class="bx" style="left:1066.6px;top:1347.8px;"></div>
<div class="bx" style="left:1114.0px;top:1347.8px;"></div>
<span class="t mono g" style="top:1394.00px;font-size:19.5px;left:33.50px;width:600px;text-align:center;letter-spacing:1.2px;">1F880</span>
<div class="bx" style="left:403.0px;top:1391.8px;"></div>
<div class="bx" style="left:450.4px;top:1391.8px;"></div>
<div class="bx" style="left:497.8px;top:1391.8px;"></div>
<div class="bx" style="left:545.2px;top:1391.8px;"></div>
<div class="bx" style="left:592.6px;top:1391.8px;"></div>
<div class="bx" style="left:640.0px;top:1391.8px;"></div>
<div class="bx" style="left:687.4px;top:1391.8px;"></div>
<div class="bx" style="left:734.8px;top:1391.8px;"></div>
<div class="bx" style="left:782.2px;top:1391.8px;"></div>
<div class="bx" style="left:829.6px;top:1391.8px;"></div>
<div class="bx" style="left:877.0px;top:1391.8px;"></div>
<div class="bx" style="left:924.4px;top:1391.8px;"></div>
<div class="bx" style="left:971.8px;top:1391.8px;"></div>
<div class="bx" style="left:1019.2px;top:1391.8px;"></div>
<div class="bx" style="left:1066.6px;top:1391.8px;"></div>
<div class="bx" style="left:1114.0px;top:1391.8px;"></div>
<div class="vl" style="left:1158px;top:114px;height:1304px"></div>
<span class="t" style="top:421.00px;font-size:21.5px;left:1010.00px;width:600px;text-align:center;letter-spacing:0.1px;">RIGHTWARDS</span>
<span class="t" style="top:449.00px;font-size:21.5px;left:1010.00px;width:600px;text-align:center;letter-spacing:0.15px;">HEAVY ARROW</span>
<span class="t b" style="top:498.00px;font-size:22.5px;left:684.00px;width:600px;text-align:right;letter-spacing:0.5px;color:#828282;">Unicode</span>
<span class="t b" style="top:532.00px;font-size:22.5px;left:684.00px;width:600px;text-align:right;letter-spacing:1.45px;color:#828282;">UTF-8</span>
<span class="t" style="top:498.00px;font-size:22px;left:1303.00px;letter-spacing:0.5px;">U+1F846</span>
<span class="t" style="top:532.00px;font-size:22px;left:1303.00px;letter-spacing:0.33px;">F0 9F A1 86</span>
<div style="left:1210px;top:582px;width:200px;height:32px;border:2px solid #b6b6b6;border-radius:6px;background:#fff"></div>
<span class="t" style="top:588.00px;font-size:22px;left:1010.00px;width:600px;text-align:center;letter-spacing:0.6px;">Add to Favorites</span>
<div class="hl" style="left:1160px;top:647px;width:300px;background:#e6e6e6"></div>

</div></div>
<div style="left:0;top:1417px;width:1454px;height:1px;background:#f4f4f4"></div>
</body></html>
